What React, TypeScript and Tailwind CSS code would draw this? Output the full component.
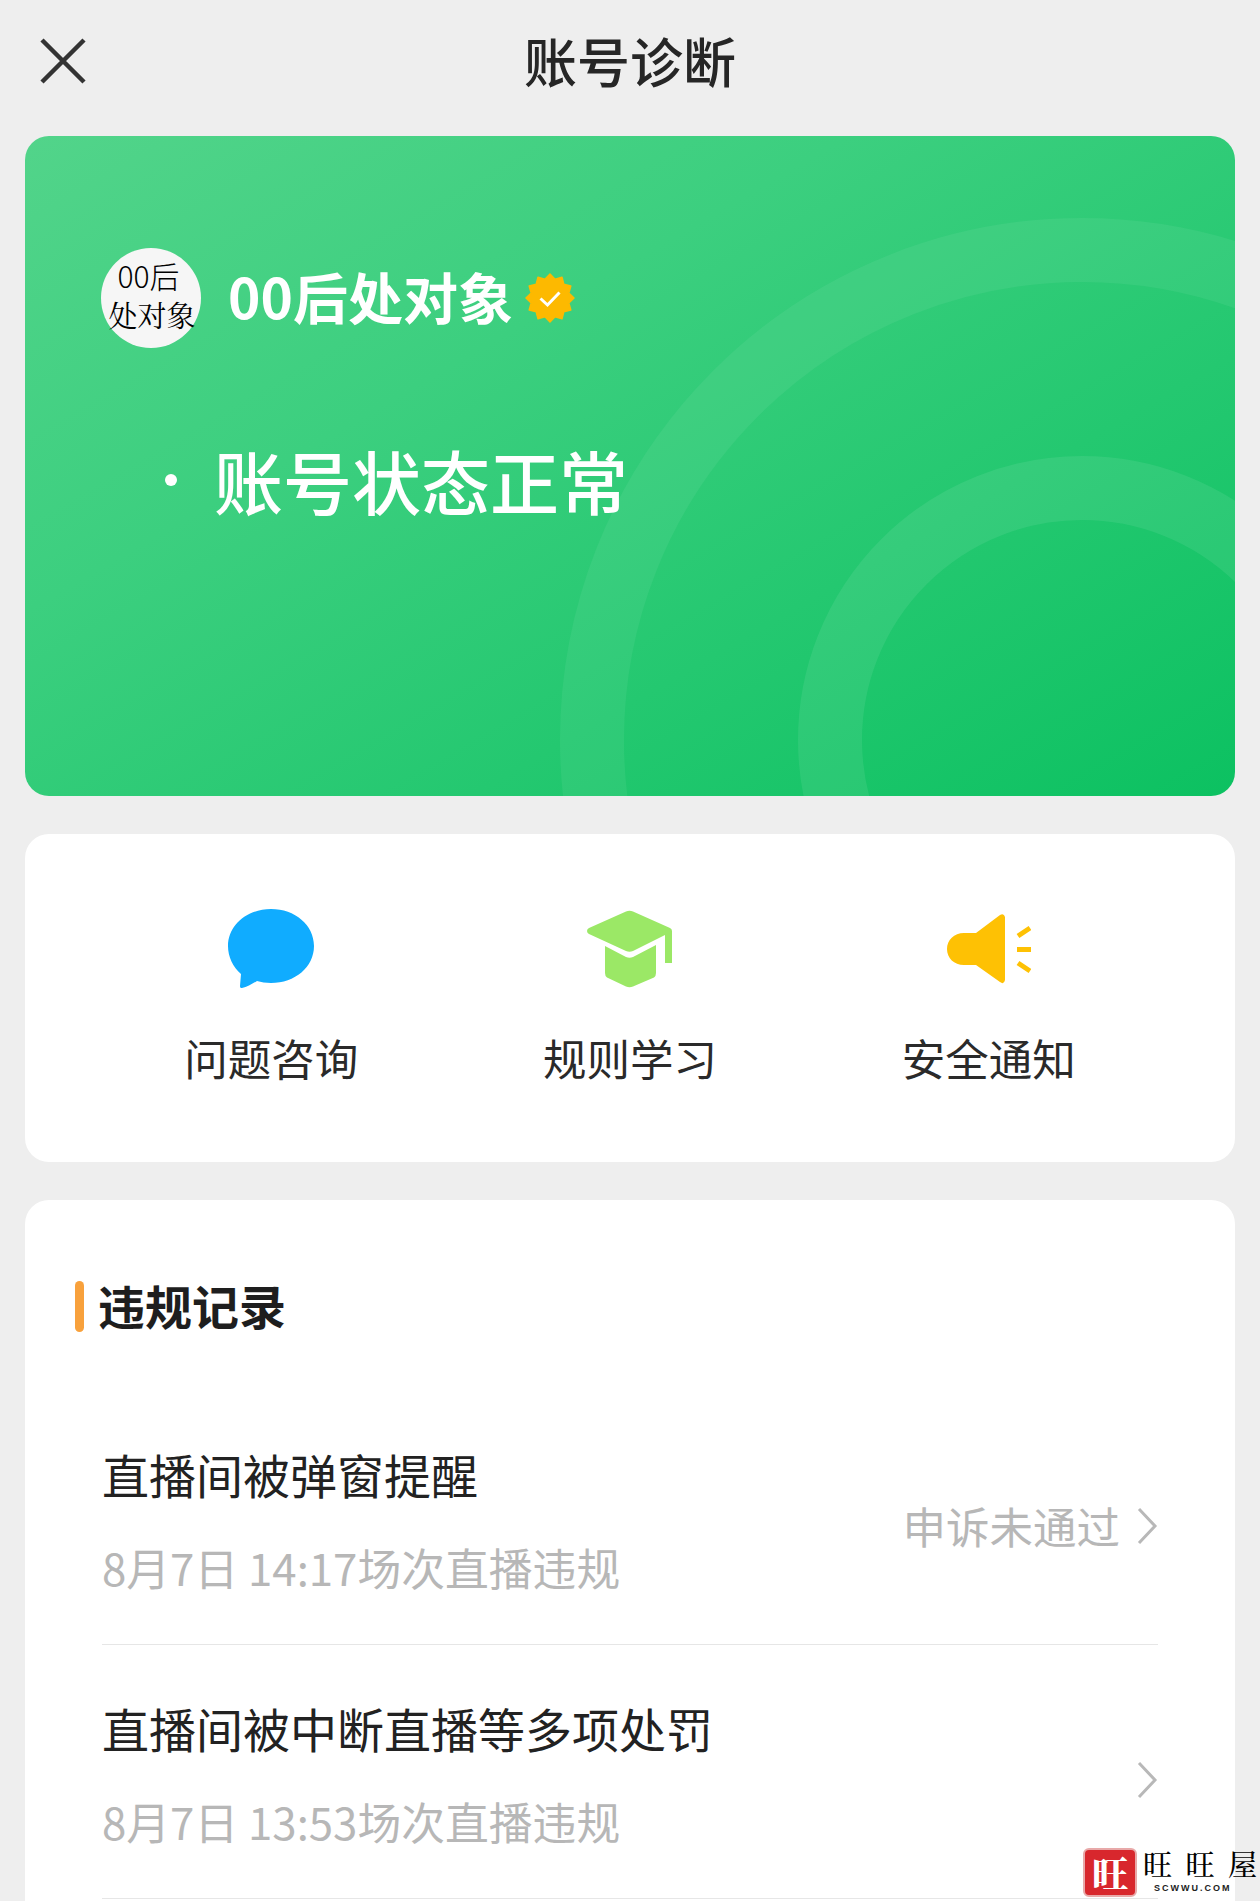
const starPoints = Array.from({ length: 24 }, (_, i) => {
  const r = i % 2 === 0 ? 24 : 19.5;
  const a = (Math.PI * i) / 12 - Math.PI / 2;
  return `${(25 + r * Math.cos(a)).toFixed(2)},${(25 + r * Math.sin(a)).toFixed(2)}`;
}).join(" ");

function Chevron() {
  return (
    <svg width="22" height="38" viewBox="0 0 22 38" fill="none" className="shrink-0">
      <path d="M3 2 L19 19 L3 36" stroke="#b8b8b8" strokeWidth="3" />
    </svg>
  );
}

function Record({ title, sub, status }: { title: string; sub: string; status?: string }) {
  return (
    <div className="h-[254px] shrink-0 border-b-[1.5px] border-[#e6e6e6] flex items-center justify-between">
      <div className="flex flex-col pt-[6px]">
        <div className="text-[47px] leading-[60px] text-[#222222]">{title}</div>
        <div className="text-[43.8px] leading-[60px] text-[#b7b7b7] mt-[33px]">{sub}</div>
      </div>
      <div className="flex items-center gap-[16px] pt-[16px]">
        {status && <span className="text-[43.5px] leading-[60px] text-[#b7b7b7]">{status}</span>}
        <Chevron />
      </div>
    </div>
  );
}

function MenuItem({ icon, label }: { icon: React.ReactNode; label: string }) {
  return (
    <div className="flex flex-col items-center">
      <div className="h-[80px] flex items-center justify-center">{icon}</div>
      <div className="text-[43.5px] leading-[60px] text-[#2a2a2a] mt-[39px]">{label}</div>
    </div>
  );
}

export default function App() {
  return (
    <div className="relative w-[1260px] h-[1901px] overflow-hidden bg-[#eeeeee] font-['Noto_Sans_CJK_SC','Noto_Sans',sans-serif]">
      {/* header */}
      <div className="relative h-[136px] flex items-center justify-center">
        <svg width="46" height="46" viewBox="0 0 46 46" fill="none" className="absolute left-[40px] top-[38px]">
          <path d="M2 2 L44 44 M44 2 L2 44" stroke="#333333" strokeWidth="4.5" />
        </svg>
        <div className="text-[53px] leading-[70px] font-medium text-[#262626] pb-[17px]">账号诊断</div>
      </div>

      <div className="flex flex-col gap-[38px] px-[25px]">
        {/* green card */}
        <div className="relative h-[660px] rounded-[24px] overflow-hidden bg-[linear-gradient(150deg,#52d48a_0%,#3ccf7f_35%,#0cc161_100%)]">
          <svg width="1210" height="660" viewBox="0 0 1210 660" fill="none" className="absolute inset-0">
            <circle cx="1057" cy="604" r="490" stroke="#ffffff" strokeOpacity="0.06" strokeWidth="64" />
            <circle cx="1057" cy="604" r="252" stroke="#ffffff" strokeOpacity="0.08" strokeWidth="64" />
          </svg>
          <div className="relative flex flex-col pl-[76px] pt-[112px]">
            <div className="flex items-center">
              <div className="w-[100px] h-[100px] rounded-full bg-[#f6f6f6] flex flex-col items-center justify-center pb-[5px] text-black font-['Noto_Serif_CJK_SC','Noto_Sans_CJK_SC',sans-serif]">
                <div className="text-[30px] leading-[36px] font-['Noto_Sans_CJK_SC',sans-serif] font-light pr-[5px] pb-[3px]">00后</div>
                <div className="text-[29px] leading-[38px] whitespace-nowrap pl-[2px]">处对象</div>
              </div>
              <div className="ml-[27px] text-[55px] leading-[70px] font-bold text-white whitespace-nowrap pb-[6px]">00后处对象</div>
              <svg width="50" height="50" viewBox="0 0 50 50" fill="none" className="ml-[12px]">
                <polygon points={starPoints} fill="#fdb900" stroke="#fdb900" strokeWidth="1.5" strokeLinejoin="round" />
                <path d="M15.5 25.5 L22.5 32 L34.5 19.5" stroke="#ffffff" strokeWidth="3" />
              </svg>
            </div>
            <div className="flex items-center mt-[87px] pl-[64px]">
              <div className="w-[12px] h-[12px] rounded-full bg-white" />
              <div className="ml-[37px] text-[69px] leading-[90px] font-medium text-white whitespace-nowrap">账号状态正常</div>
            </div>
          </div>
        </div>

        {/* menu card */}
        <div className="h-[328px] rounded-[24px] bg-white grid grid-cols-3 items-start px-[67px] pt-[75px]">
          <MenuItem
            label="问题咨询"
            icon={
              <svg width="88" height="80" viewBox="0 0 88 80" fill="none">
                <path
                  d="M44 0 C68 0 87 16 87 37 C87 58 68 74 44 74 C39 74 34 73 30 72 C25 75 20 78 15 79 C13.500 79.500 13 78 13 77 L14 65 C6 58 1 48 1 37 C1 16 20 0 44 0 Z"
                  fill="#10acff"
                />
              </svg>
            }
          />
          <MenuItem
            label="规则学习"
            icon={
              <svg width="86" height="78" viewBox="0 0 86 78" fill="none">
                <path
                  d="M39 1.500 Q42.500 0 46 1.500 L83 18 Q85 19 85 21 L85 53 L78 53 L78 25 L46 41 Q42.500 42.500 39 41 L2 24 Q0 23 0 21 Q0 19 2 18 Z"
                  fill="#9be866"
                />
                <path
                  d="M18 36 L39 47 Q42.500 48.500 46 47 L69 35 L69 63 Q69 66 67 67.500 L46 76.500 Q42.500 78 39 76.500 L20 67.500 Q18 66 18 63 Z"
                  fill="#9be866"
                />
              </svg>
            }
          />
          <MenuItem
            label="安全通知"
            icon={
              <svg width="84" height="70" viewBox="0 0 84 70" fill="none">
                <path
                  d="M53 1 Q57 -1 58 3 L58 66 Q57 71 53 68 L29 51 L17 51 C7 51 0 44 0 35 C0 26 7 19 17 19 L29 19 Z"
                  fill="#fec104"
                />
                <path d="M71 22 L83 14 M70 35.500 L84 35.500 M71 49 L83 57" stroke="#fec104" strokeWidth="5" />
              </svg>
            }
          />
        </div>

        {/* records card */}
        <div className="h-[720px] rounded-t-[24px] bg-white flex flex-col">
          <div className="h-[170px] shrink-0 flex items-center pl-[50px] pt-[40px]">
            <div className="w-[9px] h-[51px] rounded-full bg-[#f8a13c] mt-[3px]" />
            <div className="ml-[14px] text-[47px] leading-[60px] font-bold text-[#1e1e1e]">违规记录</div>
          </div>
          <div className="flex flex-col px-[77px] pt-[21px]">
            <Record title="直播间被弹窗提醒" sub="8月7日 14:17场次直播违规" status="申诉未通过" />
            <Record title="直播间被中断直播等多项处罚" sub="8月7日 13:53场次直播违规" />
          </div>
        </div>
      </div>

      {/* watermark */}
      <div className="absolute left-[1083px] top-[1848px] flex items-start">
        <div className="w-[54px] h-[49px] rounded-[6px] bg-[#d8272d] border-2 border-[#e8a9a9] flex items-center justify-center text-[36px] leading-none font-black text-white font-['Noto_Serif_CJK_SC','Noto_Sans_CJK_SC',serif]">
          旺
        </div>
        <div className="ml-[6px] flex flex-col">
          <div className="flex w-[114px] justify-between text-[29px] leading-[32px] whitespace-nowrap font-medium text-black font-['Noto_Serif_CJK_SC','Noto_Sans_CJK_SC',serif]">
            <span>旺</span>
            <span>旺</span>
            <span>屋</span>
          </div>
          <div className="text-[9px] leading-[14px] tracking-[2px] font-bold text-[#222222] font-['Liberation_Sans',sans-serif] mt-[1px] ml-[11px]">
            SCWWU.COM
          </div>
        </div>
      </div>
    </div>
  );
}
